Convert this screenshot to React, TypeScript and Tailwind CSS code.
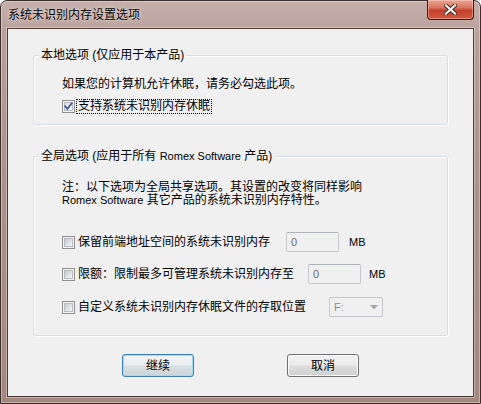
import React from "react";

const FONT = '"Liberation Sans", "Noto Sans CJK SC", sans-serif';

function Checkbox({ checked = false }: { checked?: boolean }) {
  const id = checked ? "cbg-on" : "cbg-off";
  return (
    <svg width="13" height="13" viewBox="0 0 13 13" className="shrink-0 block">
      <defs>
        <linearGradient id={id} x1="0" y1="0" x2="1" y2="1">
          <stop offset="0" stopColor={checked ? "#d9dce0" : "#c3c7cc"} />
          <stop offset="1" stopColor="#f8f8f8" />
        </linearGradient>
      </defs>
      <rect x="0.5" y="0.5" width="12" height="12" fill="#f4f4f4" stroke="#8e8f8f" />
      <rect x="2.5" y="2.5" width="8" height="8" fill={`url(#${id})`} stroke="#b8bcc2" />
      {checked && (
        <path d="M3.2 6.3 L5.4 8.8 L9.8 3.2" stroke="#3f5b9e" strokeWidth="1.8" fill="none" strokeLinecap="square" />
      )}
    </svg>
  );
}

function GroupBox({ label, children, className = "" }: { label: React.ReactNode; children: React.ReactNode; className?: string }) {
  return (
    <div
      className={`mx-[25px] w-[415px] rounded-[3px] border border-[#d5dfe5] shadow-[inset_1px_1px_0_#ffffff,1px_1px_0_#ffffff] px-[28px] ${className}`}
    >
      <div className="-mt-[8px] -ml-[23px] w-fit bg-[#f0f0f0] px-[2px] text-[12px] leading-[14px] text-black">{label}</div>
      {children}
    </div>
  );
}

function DisabledInput({ value }: { value: string }) {
  return (
    <div className="w-[53px] h-[20px] rounded-[2px] border border-[#c4c7cc] border-t-[#adb2b5] bg-[#f0f0f0] flex items-center pl-[4px] text-[11px] text-[#6d6d6d]">
      {value}
    </div>
  );
}

function Button({ label, isDefault = false }: { label: string; isDefault?: boolean }) {
  return (
    <div
      className={`w-[72px] h-[23px] rounded-[3px] border flex items-center justify-center text-[12px] text-black ${
        isDefault
          ? "border-[#3c7fb1] shadow-[inset_0_0_0_1px_#9fdcf5] bg-[linear-gradient(to_bottom,#f2f4f5_0%,#ebeef0_48%,#d9dfe3_52%,#ccd4d9_100%)]"
          : "border-[#707070] shadow-[inset_0_0_0_1px_#fcfcfc] bg-[linear-gradient(to_bottom,#f2f2f2_0%,#ebebeb_48%,#dddddd_52%,#cfcfcf_100%)]"
      }`}
    >
      {label}
    </div>
  );
}

export default function App() {
  return (
    <div className="w-[481px] h-[404px] bg-white" style={{ fontFamily: FONT }}>
      <div className="w-full h-full flex flex-col rounded-t-[7px] border border-[#3b2f2d] bg-[linear-gradient(to_bottom,#c5aeaa_0%,#b9a09b_8%,#ad928d_40%,#a4877f_100%)] shadow-[inset_0_0_0_1px_rgba(255,255,255,0.35)]">
        {/* Title bar */}
        <div className="h-[27px] flex items-start justify-between pl-[7px] pr-[6px]">
          <div className="mt-[7px] text-[12px] leading-[14px] text-black [text-shadow:0_0_6px_rgba(255,255,255,0.7),0_0_2px_rgba(255,255,255,0.5)]">
            系统未识别内存设置选项
          </div>
          <div className="-mt-px w-[47px] h-[20px] rounded-b-[4px] border border-[#3e1a14] border-t-0 bg-[linear-gradient(to_bottom,#e9a592_0%,#d9755f_40%,#c4402a_55%,#cf5a40_100%)] shadow-[inset_0_0_0_1px_rgba(255,210,200,0.45)] flex items-center justify-center">
            <svg width="13" height="11" viewBox="0 0 13 11">
              <path d="M2 1.5 L11 9.5 M11 1.5 L2 9.5" stroke="#4a1c14" strokeWidth="4" strokeLinecap="square" />
              <path d="M2 1.5 L11 9.5 M11 1.5 L2 9.5" stroke="#ffffff" strokeWidth="2.2" strokeLinecap="square" />
            </svg>
          </div>
        </div>

        {/* Client area */}
        <div className="mx-[6px] h-[369px] border border-[#4d3c39] bg-[#f0f0f0] shadow-[0_0_0_1px_rgba(255,255,255,0.35)] flex flex-col">
          <GroupBox label="本地选项 (仅应用于本产品)" className="mt-[26px] pb-[10px]">
            <div className="mt-[15px] text-[12px] leading-[14px] text-black">如果您的计算机允许休眠，请务必勾选此项。</div>
            <div className="mt-[8px] h-[15px] flex items-center">
              <Checkbox checked />
              <span className="ml-[1px] h-[15px] border border-dotted border-black px-[1px] text-[12px] leading-[13px] text-black">
                支持系统未识别内存休眠
              </span>
            </div>
          </GroupBox>

          <GroupBox
            label={
              <>
                全局选项 (应用于所有 <span className="text-[11px]">Romex Software</span> 产品)
              </>
            }
            className="mt-[31px] pb-[18px]"
          >
            <div className="mt-[18px] text-[12px] leading-[13px] text-black">
              注：以下选项为全局共享选项。其设置的改变将同样影响
              <br />
              <span className="text-[11px]">Romex Software</span> 其它产品的系统未识别内存特性。
            </div>

            <div className="mt-[25px] h-[20px] flex items-center text-[12px] text-black">
              <Checkbox />
              <span className="ml-[3px]">保留前端地址空间的系统未识别内存</span>
              <div className="ml-[16px]">
                <DisabledInput value="0" />
              </div>
              <span className="ml-[10px] text-[11px]">MB</span>
            </div>

            <div className="mt-[12px] h-[20px] flex items-center text-[12px] text-black">
              <Checkbox />
              <span className="ml-[3px]">限额：限制最多可管理系统未识别内存至</span>
              <div className="ml-[14px]">
                <DisabledInput value="0" />
              </div>
              <span className="ml-[8px] text-[11px]">MB</span>
            </div>

            <div className="mt-[13px] h-[20px] flex items-center text-[12px] text-black">
              <Checkbox />
              <span className="ml-[3px]">自定义系统未识别内存休眠文件的存取位置</span>
              <div className="ml-[23px] w-[54px] h-[20px] rounded-[2px] border border-[#c4c7cc] bg-[#f0f0f0] flex items-center justify-between pl-[4px] pr-[4px] text-[11px] text-[#8d8d8d]">
                <span>F:</span>
                <svg width="8" height="5" viewBox="0 0 8 5">
                  <path d="M0 0 L8 0 L4 4.5 Z" fill="#a6a6a6" />
                </svg>
              </div>
            </div>
          </GroupBox>

          <div className="mt-[18px] flex pl-[114px] gap-[93px]">
            <Button label="继续" isDefault />
            <Button label="取消" />
          </div>
        </div>
      </div>
    </div>
  );
}
